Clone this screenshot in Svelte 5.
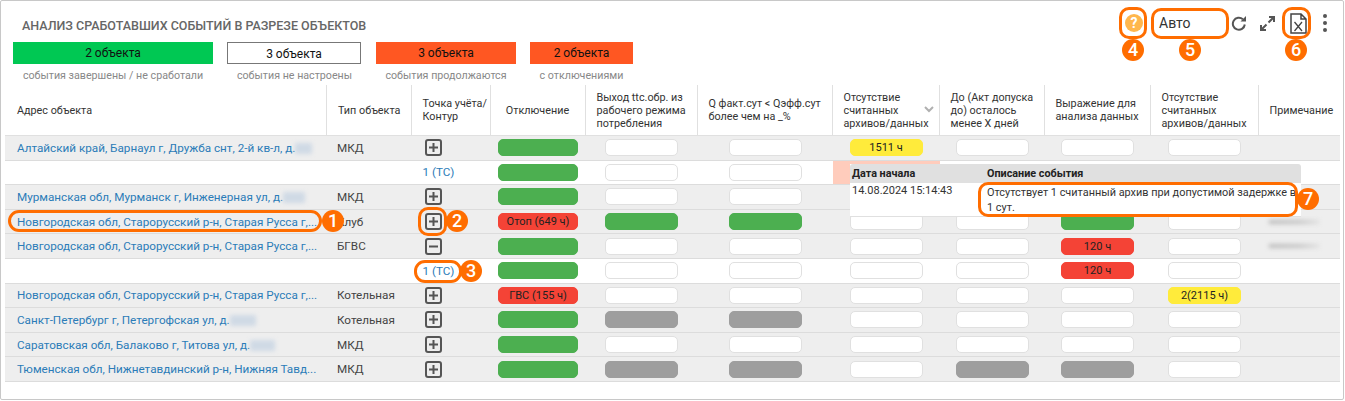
<script>
  const legend = [
    { cls: 'green', w: 200, n: '2 объекта', cap: 'события завершены / не сработали' },
    { cls: 'plain', w: 135, n: '3 объекта', cap: 'события не настроены' },
    { cls: 'orange', w: 140, n: '3 объекта', cap: 'события продолжаются' },
    { cls: 'orange', w: 103, n: '2 объекта', cap: 'с отключениями' }
  ];

  const columns = [
    { key: 'addr', title: 'Адрес объекта' },
    { key: 'type', title: 'Тип объекта' },
    { key: 'point', title: 'Точка учёта/ Контур' },
    { key: 'off', title: 'Отключение', center: true },
    { key: 'exit', title: 'Выход ttc.обр. из рабочего режима потребления' },
    { key: 'q', title: 'Q факт.сут < Qэфф.сут более чем на _%' },
    { key: 'missing', title: 'Отсутствие считанных архивов/данных', sort: true },
    { key: 'until', title: 'До (Акт допуска до) осталось менее Х дней' },
    { key: 'expr', title: 'Выражение для анализа данных' },
    { key: 'missing2', title: 'Отсутствие считанных архивов/данных' },
    { key: 'note', title: 'Примечание' }
  ];

  // g green, w empty, n grey, [cls, text] for pills with a value
  const rows = [
    { addr: 'Алтайский край, Барнаул г, Дружба снт, 2-й кв-л, д.', blur: 17, type: 'МКД', icon: 'plus', cells: ['g', 'w', 'w', ['y', '1511 ч'], 'w', 'w', 'w'] },
    { sub: true, alert: true, cells: ['g', 'w', 'w', 'w', 'w', 'w', 'w'] },
    { addr: 'Мурманская обл, Мурманск г, Инженерная ул, д.', blur: 22, type: 'МКД', icon: 'plus', cells: ['g', 'w', 'w', 'w', 'w', 'w', 'w'] },
    { addr: 'Новгородская обл, Старорусский р-н, Старая Русса г,...', type: 'Клуб', icon: 'plus', note: true, cells: [['r', 'Отоп (649 ч)'], 'g', 'g', 'w', 'w', 'g', 'w'] },
    { addr: 'Новгородская обл, Старорусский р-н, Старая Русса г,...', type: 'БГВС', icon: 'minus', note: true, cells: ['g', 'w', 'w', 'w', 'w', ['r', '120 ч'], 'w'] },
    { sub: true, cells: ['g', 'w', 'w', 'w', 'w', ['r', '120 ч'], 'w'] },
    { addr: 'Новгородская обл, Старорусский р-н, Старая Русса г,...', type: 'Котельная', icon: 'plus', cells: [['r', 'ГВС (155 ч)'], 'w', 'w', 'w', 'w', 'w', ['y', '2(2115 ч)']] },
    { addr: 'Санкт-Петербург г, Петергофская ул, д.', blur: 26, type: 'Котельная', icon: 'plus', cells: ['g', 'n', 'n', 'w', 'w', 'w', 'w'] },
    { addr: 'Саратовская обл, Балаково г, Титова ул, д.', blur: 25, type: 'МКД', icon: 'plus', cells: ['g', 'w', 'w', 'w', 'w', 'w', 'w'] },
    { addr: 'Тюменская обл, Нижнетавдинский р-н, Нижняя Тавд...', type: 'МКД', icon: 'plus', cells: ['g', 'n', 'n', 'w', 'n', 'n', 'w'] }
  ];

  const marks = [
    { n: 1, x: 8, y: 210, w: 314, h: 22, r: 11, cx: 333, cy: 221 },
    { n: 2, x: 418, y: 207, w: 29, h: 29, r: 10, cx: 457, cy: 221 },
    { n: 3, x: 414, y: 260, w: 48, h: 23, r: 11, cx: 471, cy: 271 },
    { n: 4, x: 1119, y: 7, w: 28, h: 32, r: 10, cx: 1133, cy: 50 },
    { n: 5, x: 1151, y: 8, w: 78, h: 31, r: 10, cx: 1190, cy: 50 },
    { n: 6, x: 1282, y: 7, w: 29, h: 32, r: 10, cx: 1296, cy: 50 },
    { n: 7, x: 978, y: 182, w: 320, h: 35, r: 10, cx: 1308, cy: 199 }
  ];
</script>

<div class="page">
  <section class="card">
    <header class="top">
      <h2>Анализ сработавших событий в разрезе объектов</h2>
      <div class="tools">
        <span class="help">?</span>
        <span class="select">Авто</span>
        <svg class="refresh" width="16" height="16" viewBox="0 0 16 16"><path d="M13.800 9.500a6 6 0 1 1-1.900-5.200" fill="none" stroke="#555" stroke-width="2"/><path d="M15 1v5.500H9.500z" fill="#555"/></svg>
        <svg class="expand" width="17" height="17" viewBox="0 0 17 17"><path d="M10 2h5v5M15 2l-5.500 5.500M7 15H2v-5M2 15l5.500-5.500" fill="none" stroke="#555" stroke-width="2"/></svg>
        <svg class="file" width="17" height="21" viewBox="0 0 17 21"><path d="M1 1h10l5 5v14H1z M11 1v5h5" fill="none" stroke="#444" stroke-width="1.500"/><path d="M4.500 9l7.500 9M12 9l-7.500 9" fill="none" stroke="#444" stroke-width="1.300"/></svg>
        <span class="dots"><i></i><i></i><i></i></span>
      </div>
    </header>

    <div class="legend">
      {#each legend as item}
        <div class="legend-item" style="width: {item.w}px">
          <div class="legend-box {item.cls}">{item.n}</div>
          <div class="legend-cap">{item.cap}</div>
        </div>
      {/each}
    </div>

    <table>
      <colgroup>
        {#each columns as col}
          <col class="c-{col.key}" />
        {/each}
      </colgroup>
      <thead>
        <tr>
          {#each columns as col}
            <th class:center={col.center}>
              <div class="th-inner">
                <span>{col.title}</span>
                {#if col.sort}
                  <svg width="10" height="7" viewBox="0 0 10 7"><path d="M1 1l4 4 4-4" fill="none" stroke="#b0b0b0" stroke-width="2"/></svg>
                {/if}
              </div>
            </th>
          {/each}
        </tr>
      </thead>
      <tbody>
        {#each rows as row}
          <tr class:sub={row.sub}>
            <td class="addr">
              {#if row.addr}
                <a href="#top">{row.addr}{#if row.blur}<span class="smudge" style="width: {row.blur}px"></span>{/if}</a>
              {/if}
            </td>
            <td class="type">{row.type ?? ''}</td>
            <td class="point">
              {#if row.sub}
                <a href="#top">1 (ТС)</a>
              {:else}
                <svg class="toggle" width="17" height="17" viewBox="0 0 17 17">
                  <rect x="1" y="1" width="15" height="15" rx="2" fill="none" stroke="#555" stroke-width="2"/>
                  <path d={row.icon === 'plus' ? 'M4 8.500h9M8.500 4v9' : 'M4 8.500h9'} stroke="#555" stroke-width="2"/>
                </svg>
              {/if}
            </td>
            {#each row.cells as cell, i}
              <td class="cell" class:alert={row.alert && i === 3}>
                {#if Array.isArray(cell)}
                  <span class="pill {cell[0]}" class:wide={i === 0}>{cell[1]}</span>
                {:else}
                  <span class="pill {cell}" class:wide={i === 0}></span>
                {/if}
              </td>
            {/each}
            <td class="note">
              {#if row.note}<span class="note-smudge"></span>{/if}
            </td>
          </tr>
        {/each}
      </tbody>
    </table>
  </section>

  <div class="popup">
    <div class="popup-head">
      <span class="p-date">Дата начала</span>
      <span>Описание события</span>
    </div>
    <div class="popup-body">
      <span class="p-date">14.08.2024 15:14:43</span>
      <span class="p-text">Отсутствует 1 считанный архив при допустимой задержке в 1 сут.</span>
    </div>
  </div>

  {#each marks as m}
    <div class="mark" style="left: {m.x}px; top: {m.y}px; width: {m.w}px; height: {m.h}px; border-radius: {m.r}px"></div>
    <div class="badge" style="left: {m.cx - 11}px; top: {m.cy - 11}px">{m.n}</div>
  {/each}
</div>

<style>
  :global(body) {
    background: #fff;
  }

  .page {
    position: relative;
    width: 1345px;
    height: 401px;
    overflow: hidden;
    font-family: Roboto, "Liberation Sans", sans-serif;
    color: #333;
  }

  .card {
    box-sizing: border-box;
    height: 400px;
    width: 1344px;
    border: 1px solid #c8c8c8;
    border-radius: 2px;
    background: #fff;
  }

  .top {
    display: flex;
    justify-content: space-between;
    height: 41px;
  }

  h2 {
    margin: 18px 0 0 21px;
    font-size: 12.500px;
    line-height: 14px;
    font-weight: 500;
    text-transform: uppercase;
    color: #666;
  }

  .tools {
    display: flex;
    align-items: center;
    height: 44px;
    padding-right: 16px;
  }

  .help {
    width: 18px;
    height: 18px;
    border-radius: 50%;
    background: #ffb74d;
    color: #fff;
    font-size: 14px;
    font-weight: 700;
    line-height: 18px;
    text-align: center;
  }

  .select {
    width: 70px;
    margin-left: 16px;
    font-size: 14px;
    color: #333;
  }

  .refresh {
    margin-left: 2px;
  }

  .expand {
    margin-left: 12px;
  }

  .file {
    margin-left: 14px;
  }

  .dots {
    display: flex;
    flex-direction: column;
    gap: 3px;
    margin-left: 16px;
  }

  .dots i {
    width: 4px;
    height: 4px;
    border-radius: 50%;
    background: #555;
  }

  .legend {
    display: flex;
    gap: 14px;
    margin-left: 12px;
    height: 43px;
  }

  .legend-item {
    text-align: center;
  }

  .legend-box {
    box-sizing: border-box;
    height: 22px;
    font-size: 12px;
    line-height: 22px;
    color: #111;
  }

  .legend-box.green {
    background: #00c853;
  }

  .legend-box.orange {
    background: #ff5722;
  }

  .legend-box.plain {
    width: 134px;
    border: 1px solid #777;
    line-height: 22px;
    background: #fff;
  }

  .legend-cap {
    margin-top: 5px;
    font-size: 10.700px;
    line-height: 14px;
    color: #888;
    white-space: nowrap;
  }

  table {
    width: 1335px;
    margin-left: 4px;
    table-layout: fixed;
    border-collapse: separate;
    border-spacing: 0;
  }

  .c-addr { width: 322px; }
  .c-type { width: 84.5px; }
  .c-point { width: 79px; }
  .c-off { width: 95px; }
  .c-exit { width: 112px; }
  .c-q { width: 135px; }
  .c-missing { width: 107px; }
  .c-until { width: 105px; }
  .c-expr { width: 106px; }
  .c-missing2 { width: 108px; }
  .c-note { width: 81.500px; }

  th {
    box-sizing: border-box;
    height: 51px;
    padding: 0 2px 0 11px;
    border-right: 1px solid #e0e0e0;
    border-bottom: 1px solid #e0e0e0;
    font-size: 10.800px;
    line-height: 13px;
    font-weight: 400;
    text-align: left;
    color: #333;
  }

  th:first-child {
    padding-left: 12px;
  }

  th:last-child {
    border-right: 0;
  }

  th.center {
    padding: 0;
    text-align: center;
  }

  .th-inner {
    position: relative;
  }

  .th-inner svg {
    position: absolute;
    right: 3px;
    top: 15px;
  }

  td {
    box-sizing: border-box;
    height: 24.600px;
    padding: 0;
    border-bottom: 1px solid #dcdcdc;
    background: #eee;
    font-size: 11.700px;
    line-height: 14px;
    vertical-align: middle;
  }

  .sub td {
    background: #fff;
  }

  td.alert {
    background: #ffccbc;
  }

  a {
    color: #2b7cb8;
    text-decoration: none;
  }

  .addr {
    padding: 0 6px 0 12px;
    white-space: nowrap;
    overflow: hidden;
  }

  .smudge {
    display: inline-block;
    height: 11px;
    vertical-align: -2px;
    background: #bccde0;
    opacity: 0.6;
    filter: blur(2px);
  }

  .type {
    padding-left: 10px;
    color: #444;
  }

  .point {
    padding-left: 11px;
  }

  .toggle {
    display: block;
    margin-left: 2px;
  }

  .cell {
    text-align: center;
  }

  .pill {
    box-sizing: border-box;
    display: inline-block;
    width: 73px;
    height: 17px;
    border-radius: 5px;
    border: 1px solid #e0e0e0;
    font-size: 11px;
    line-height: 15px;
    color: #222;
    vertical-align: middle;
  }

  .pill.wide {
    width: 80px;
  }

  .pill.w {
    background: #fff;
  }

  .pill.g {
    background: #4caf50;
    border-color: #4caf50;
  }

  .pill.n {
    background: #9e9e9e;
    border-color: #9e9e9e;
  }

  .pill.r {
    background: #f44336;
    border-color: #f44336;
  }

  .pill.y {
    background: #ffeb3b;
    border-color: #ffeb3b;
  }

  .note {
    padding-left: 10px;
  }

  .note-smudge {
    display: block;
    width: 50px;
    height: 4px;
    background: linear-gradient(90deg, #bbb, #c4c4c4 60%, #e0e0e0);
    filter: blur(2px);
  }

  .popup {
    position: absolute;
    left: 850px;
    top: 164px;
    width: 451px;
    height: 53px;
    background: #fff;
    border-bottom: 1px solid #e0e0e0;
    box-sizing: border-box;
    font-size: 11px;
    color: #333;
  }

  .popup-head {
    display: flex;
    height: 19px;
    border-radius: 3px 3px 0 0;
    background: #e0e0e0;
    font-weight: 700;
    font-size: 10.800px;
    line-height: 19px;
    color: #222;
  }

  .popup-body {
    display: flex;
    line-height: 15px;
  }

  .p-date {
    width: 137px;
    padding-left: 2px;
    box-sizing: border-box;
  }

  .p-text {
    width: 312px;
    padding-top: 2px;
    font-size: 10.900px;
  }

  .mark {
    position: absolute;
    box-sizing: border-box;
    border: 3px solid #ff6d00;
    pointer-events: none;
  }

  .badge {
    position: absolute;
    width: 22px;
    height: 22px;
    border-radius: 50%;
    background: #ff6d00;
    color: #fff;
    font-size: 18px;
    font-weight: 500;
    line-height: 22px;
    text-align: center;
  }
</style>
